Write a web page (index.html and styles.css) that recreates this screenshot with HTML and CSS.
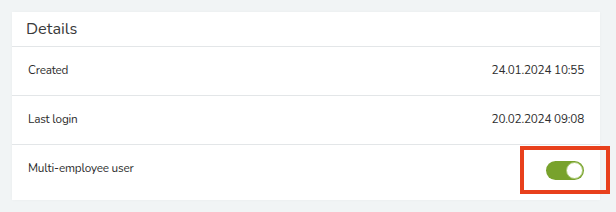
FILE: index.html
```html
<!DOCTYPE html>
<html>
<head>
<meta charset="utf-8">
<link rel="stylesheet" href="styles.css">
</head>
<body>
<div class="page">
  <section class="card">
    <header class="card-header">Details</header>
    <div class="row">
      <span class="label">Created</span>
      <span class="value">24.01.2024 10:55</span>
    </div>
    <div class="row">
      <span class="label">Last login</span>
      <span class="value">20.02.2024 09:08</span>
    </div>
    <div class="row row-last">
      <span class="label">Multi-employee user</span>
      <span class="toggle-wrap">
        <span class="toggle"><span class="knob"></span></span>
        <span class="highlight"></span>
      </span>
    </div>
  </section>
</div>
</body>
</html>
```

FILE: styles.css
```css
html, body {
  margin: 0;
  padding: 0;
  background: #f1f4f5;
}
body {
  font-family: "Nunito", "Lato", "Open Sans", sans-serif;
  color: #2b2b2b;
}
.page {
  padding: 12px 16px 12px 12px;
  width: 588px;
}
.card {
  background: #ffffff;
  width: 588px;
  padding-bottom: 7px;
  box-shadow: 0 0 3px rgba(0,0,0,0.03);
}
.card-header {
  height: 34px;
  padding: 0 14px;
  display: flex;
  align-items: center;
  font-size: 16.3px;
  color: #3a3a3a;
  border-bottom: 1px solid #e3e6e8;
}
.row {
  height: 49px;
  padding: 0 16px 2px;
  box-sizing: border-box;
  display: flex;
  align-items: center;
  justify-content: space-between;
  border-bottom: 1px solid #e3e6e8;
  font-size: 11.75px;
  letter-spacing: -0.2px;
}
.row-last {
  border-bottom: none;
  height: 48px;
}
.label {
  color: #2d2d2d;
}
.value {
  color: #2d2d2d;
}
.toggle-wrap {
  position: relative;
  display: flex;
  margin-top: 4px;
}
.toggle {
  width: 38px;
  height: 19px;
  border-radius: 10px;
  background: #78a22c;
  display: flex;
  justify-content: flex-end;
  align-items: center;
  padding: 0 1px;
  box-sizing: border-box;
}
.knob {
  width: 17px;
  height: 17px;
  border-radius: 50%;
  background: #fff;
  box-sizing: border-box;
  border: 1px solid #a9c873;
}
.highlight {
  position: absolute;
  left: -26px;
  top: -15px;
  width: 90px;
  height: 48px;
  box-sizing: border-box;
  border: 4px solid #e8401c;
}
```
